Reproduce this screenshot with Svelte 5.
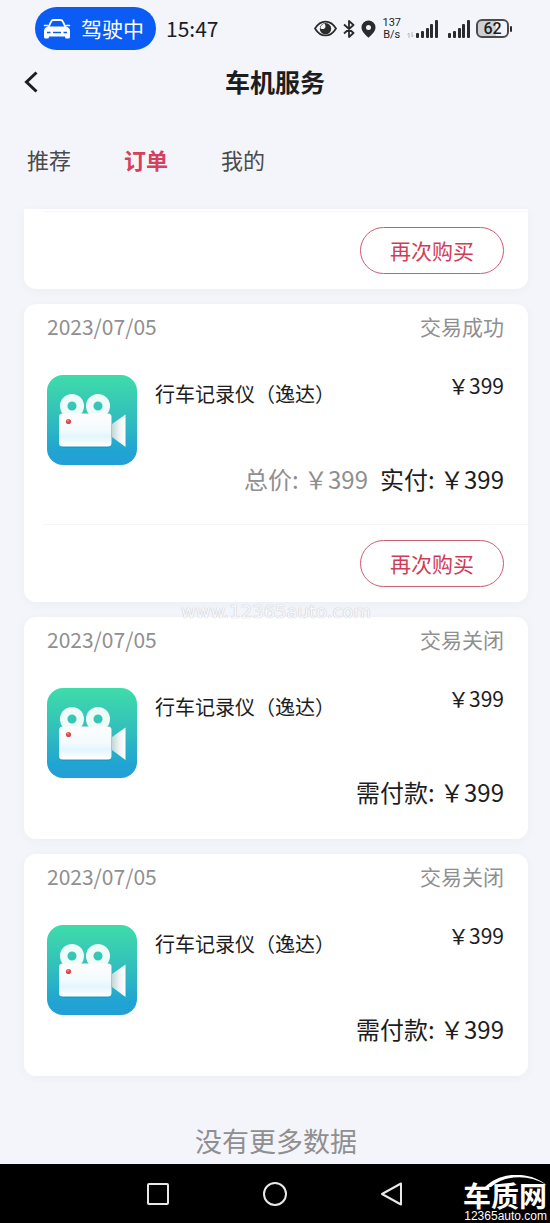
<script>
  const tabs = ['推荐', '订单', '我的'];
  let active = $state('订单');

  const orders = [
    { status: '交易成功', total: '￥399', payLabel: '实付: ', again: true },
    { status: '交易关闭', payLabel: '需付款: ', again: false },
    { status: '交易关闭', payLabel: '需付款: ', again: false }
  ];
</script>

{#snippet signal()}
  <svg class="signal" width="22" height="18" viewBox="0 0 22 18" fill="#2b2b2d" aria-hidden="true">
    <rect x="0" y="13" width="3" height="5" rx="1" />
    <rect x="5" y="11" width="3" height="7" rx="1" />
    <rect x="10" y="8" width="3" height="10" rx="1" />
    <rect x="14" y="4" width="3" height="14" rx="1" />
    <rect x="19" y="0" width="3" height="18" rx="1" />
  </svg>
{/snippet}

{#snippet camera()}
  <svg class="thumb" width="90" height="90" viewBox="0 0 90 90" aria-hidden="true">
    <defs>
      <linearGradient id="tile" x1="0" y1="0" x2="0" y2="1">
        <stop offset="0" stop-color="#3fdca9" />
        <stop offset="0.5" stop-color="#31bdbd" />
        <stop offset="0.85" stop-color="#20a4d3" />
        <stop offset="1" stop-color="#239fd6" />
      </linearGradient>
      <linearGradient id="camBody" x1="0" y1="0" x2="0" y2="1">
        <stop offset="0" stop-color="#fdfdfd" />
        <stop offset="0.5" stop-color="#f3fbfd" />
        <stop offset="0.7" stop-color="#e2f6fd" />
        <stop offset="1" stop-color="#ffffff" />
      </linearGradient>
      <linearGradient id="horn" x1="0" y1="0" x2="1" y2="0">
        <stop offset="0" stop-color="#c3d6d8" />
        <stop offset="0.55" stop-color="#eef4f3" />
        <stop offset="1" stop-color="#ffffff" />
      </linearGradient>
    </defs>
    <rect width="90" height="90" rx="16" fill="url(#tile)" />
    <path d="M65 49 78.500 39.500V72L65 62z" fill="url(#horn)" />
    <g fill="none" stroke="#eefbf8" stroke-width="7.500">
      <circle cx="25" cy="31" r="8.300" />
      <circle cx="51" cy="31" r="8.300" />
    </g>
    <rect x="12.500" y="40" width="52" height="33" rx="4" fill="#158ab5" opacity="0.45" />
    <rect x="12" y="38.500" width="52.500" height="33" rx="3.500" fill="url(#camBody)" />
    <circle cx="21.500" cy="46.500" r="2.600" fill="#d9494f" />
    <circle cx="21" cy="45.500" r="0.900" fill="#f09a98" />
  </svg>
{/snippet}

<div class="screen">
  <header class="status">
    <div class="pill">
      <svg width="28" height="20" viewBox="0 0 28 20" aria-hidden="true">
        <path d="M5.500 8 8 2.800Q8.700 1 10.500 1H17.500Q19.300 1 20 2.800L22.500 8" fill="none" stroke="#fff" stroke-width="1.800" />
        <path d="M5 7.500H23Q27 8.500 27 12V18Q27 19.500 25.500 19.500H23.500Q22 19.500 22 18V17.500H6V18Q6 19.500 4.500 19.500H2.500Q1 19.500 1 18V12Q1 8.500 5 7.500z" fill="#fff" />
        <path d="M1.500 6.500H4.500M23.500 6.500H26.500" stroke="#fff" stroke-width="1.500" stroke-linecap="round" />
        <path d="M4 13.500H7.500M20.500 13.500H24M10 13.500H18" stroke="#0b5cf5" stroke-width="1.500" />
      </svg>
      <span>驾驶中</span>
    </div>
    <time>15:47</time>
    <div class="indicators">
      <svg width="23" height="17" viewBox="0 0 23 17" aria-hidden="true">
        <path d="M1 8.500C6.500-.8 16.500-.8 22 8.500 16.500 17.800 6.500 17.800 1 8.500z" fill="none" stroke="#2b2b2d" stroke-width="1.700" />
        <circle cx="11.500" cy="8.800" r="5.700" fill="#2b2b2d" />
        <path d="M10.500 3.500Q12.500 6.500 10.500 8.500 8.500 9.800 6.300 8.200 7 4.500 10.500 3.500z" fill="#f4f5fa" />
      </svg>
      <svg width="12" height="18" viewBox="0 0 12 18" fill="none" stroke="#2b2b2d" stroke-width="1.800" aria-hidden="true">
        <path d="M1 4.500 10.500 13 6 17V1L10.500 5 1 13.500" stroke-linejoin="round" />
      </svg>
      <svg width="15" height="18" viewBox="0 0 15 18" aria-hidden="true">
        <path d="M7.500.5A7 7 0 0 1 14.500 7.500C14.500 11.500 10 15.500 7.500 17.700 5 15.500.5 11.500.5 7.500A7 7 0 0 1 7.500.5zM7.500 5A2.500 2.500 0 1 0 7.500 10 2.500 2.500 0 0 0 7.500 5z" fill="#2b2b2d" fill-rule="evenodd" />
      </svg>
      <span class="rate"><span>137</span><span>B/s</span></span>
      <span class="cell">
        <svg width="7" height="6" viewBox="0 0 7 6" fill="none" stroke="#b5b7bc" aria-hidden="true">
          <path d="M2 6V1L.5 2.500M5 0V5L6.500 3.500" />
        </svg>
        {@render signal()}
      </span>
      {@render signal()}
      <span class="battery">62</span>
    </div>
  </header>

  <div class="titlebar">
    <button class="back" aria-label="返回">
      <svg width="14" height="22" viewBox="0 0 14 22" fill="none" stroke="#1d1d1f" stroke-width="3" aria-hidden="true">
        <path d="M12.500 1.500 2.500 11 12.500 20.500" />
      </svg>
    </button>
    <h1>车机服务</h1>
  </div>

  <nav class="tabs">
    {#each tabs as tab}
      <button class:active={tab === active} onclick={() => (active = tab)}>{tab}</button>
    {/each}
  </nav>

  <main class="list">
    <article class="card cut">
      <div class="actions"><button>再次购买</button></div>
    </article>

    {#each orders as order}
      <article class="card">
        <div class="head"><span>2023/07/05</span><span>{order.status}</span></div>
        <div class="item">
          {@render camera()}
          <h2>行车记录仪（逸达）</h2>
          <span class="price">￥399</span>
        </div>
        <div class="sum">
          {#if order.total}<span class="total">总价: {order.total}</span>{/if}
          <span>{order.payLabel}￥399</span>
        </div>
        {#if order.again}
          <div class="actions"><button>再次购买</button></div>
        {/if}
      </article>
      {#if order.again}
        <div class="watermark"><span>www.12365auto.com</span></div>
      {/if}
    {/each}

    <p class="end">没有更多数据</p>
  </main>

  <footer class="navbar">
    <button aria-label="最近任务">
      <svg width="24" height="24" viewBox="0 0 24 24"><rect x="2" y="2" width="20" height="20" rx="1" /></svg>
    </button>
    <button aria-label="主屏幕">
      <svg width="24" height="24" viewBox="0 0 24 24"><circle cx="12" cy="12" r="11" /></svg>
    </button>
    <button aria-label="返回上一页">
      <svg width="24" height="24" viewBox="0 0 24 24"><path d="M21 1.500V22.500L2 12z" /></svg>
    </button>
    <div class="brand">
      <svg width="62" height="12" viewBox="0 0 62 12" aria-hidden="true">
        <path d="M0 12C14-3 44-5 62 10.500 44-1.500 20 0 6 12z" fill="#fff" />
      </svg>
      <strong>车质网</strong>
      <span>12365auto.com</span>
    </div>
  </footer>
</div>

<style>
  :global(body) {
    margin: 0;
    background: #f4f5fa;
  }

  .screen {
    display: flex;
    flex-direction: column;
    min-height: 100vh;
    background: #f4f5fa;
    color: #1d1d1f;
    font-family: 'Noto Sans CJK SC', sans-serif;
    font-size: 21px;
  }

  button {
    padding: 0;
    border: 0;
    background: none;
    color: inherit;
    font: inherit;
    cursor: pointer;
  }

  h1,
  h2,
  p {
    margin: 0;
  }

  svg {
    display: block;
    flex: none;
  }

  .status {
    display: flex;
    align-items: center;
    padding: 7px 41px 0 35px;
  }

  .pill {
    display: flex;
    align-items: center;
    gap: 10px;
    height: 43px;
    padding: 0 12px 0 8px;
    border-radius: 22px;
    background: #0b5cf5;
    color: #fff;
    line-height: 43px;
  }

  time {
    margin-left: 10px;
    line-height: 43px;
  }

  .indicators {
    display: flex;
    align-items: center;
    gap: 6px;
    margin-left: auto;
  }

  .rate {
    display: flex;
    flex-direction: column;
    align-items: center;
    font: 11px/12px Roboto, sans-serif;
  }

  .cell {
    display: flex;
    align-items: flex-end;
    gap: 2px;
    margin-right: 4px;
  }

  .battery {
    position: relative;
    box-sizing: border-box;
    width: 33px;
    height: 19px;
    border: 2px solid #4b4b4e;
    border-radius: 6px;
    background: linear-gradient(90deg, #cfcfd3 62%, #f4f5fa 62%);
    font: 500 16px/16px Roboto, sans-serif;
    text-align: center;
  }

  .battery::after {
    content: '';
    position: absolute;
    top: 5px;
    right: -5px;
    width: 2px;
    height: 6px;
    border-radius: 1px;
    background: #2b2b2d;
  }

  .titlebar {
    display: grid;
    grid-template-columns: 1fr auto 1fr;
    align-items: center;
    height: 64px;
  }

  .back {
    justify-self: start;
    padding-left: 24px;
  }

  h1 {
    padding-bottom: 3px;
    font-size: 25px;
    font-weight: 700;
    line-height: 36px;
  }

  .tabs {
    display: flex;
    gap: 53px;
    padding: 28px 27px 33px;
    color: #4a4a4c;
    font-size: 22px;
    line-height: 34px;
  }

  .tabs .active {
    color: #d5405c;
    font-weight: 700;
  }

  .list {
    display: flex;
    flex: 1;
    flex-direction: column;
    gap: 15px;
    padding: 0 22px 0 24px;
  }

  .card {
    border-radius: 12px;
    background: #fff;
    box-shadow: 0 2px 10px rgba(60, 80, 120, 0.04);
  }

  .cut {
    padding-top: 2px;
    border-radius: 0 0 12px 12px;
  }

  .head {
    display: flex;
    justify-content: space-between;
    padding: 0 24px 4px 23px;
    color: #8f8f91;
    line-height: 44px;
  }

  .item {
    display: flex;
    padding: 23px 24px 0 23px;
  }

  h2 {
    flex: 1;
    margin-left: 18px;
    font-size: 20px;
    font-weight: 400;
    line-height: 38px;
  }

  .price {
    line-height: 20px;
  }

  .sum {
    display: flex;
    justify-content: flex-end;
    gap: 12px;
    padding: 0 24px 31px;
    font-size: 24px;
    line-height: 28px;
  }

  .sum:last-child {
    padding-bottom: 33px;
  }

  .total {
    color: #8f8f91;
  }

  .actions {
    display: flex;
    justify-content: flex-end;
    margin-left: 19px;
    padding: 15px 24px 15px 0;
    border-top: 1px solid #f6f6f8;
  }

  .actions button {
    box-sizing: border-box;
    width: 144px;
    height: 47px;
    padding-bottom: 2px;
    border: 1px solid #cf5a72;
    border-radius: 24px;
    color: #cf3c57;
  }

  .watermark {
    position: relative;
    height: 0;
    margin-bottom: -15px;
  }

  .watermark span {
    position: absolute;
    top: -15px;
    left: 0;
    right: 0;
    color: #f7f8fb;
    font: 18px/20px 'DejaVu Sans', sans-serif;
    text-align: center;
    text-shadow: 0 0 1px #b9bbc2, 0 0 1px #d5d7dd;
  }

  .end {
    padding: 32px 0 4px;
    color: #8f8f91;
    font-size: 27px;
    line-height: 36px;
    text-align: center;
  }

  .navbar {
    position: relative;
    display: flex;
    align-items: center;
    justify-content: center;
    gap: 93px;
    height: 59px;
    background: #000;
  }

  .navbar button svg {
    fill: none;
    stroke: #e8e8e8;
    stroke-width: 2;
    stroke-linejoin: round;
  }

  .brand {
    position: absolute;
    right: 3px;
    bottom: 1px;
    display: flex;
    flex-direction: column;
    align-items: flex-end;
    color: #fff;
  }

  .brand strong {
    margin-top: -4px;
    font-size: 28px;
    font-weight: 700;
    line-height: 24px;
  }

  .brand span {
    margin-top: 3px;
    font: 12px/12px 'Liberation Sans', sans-serif;
  }
</style>
